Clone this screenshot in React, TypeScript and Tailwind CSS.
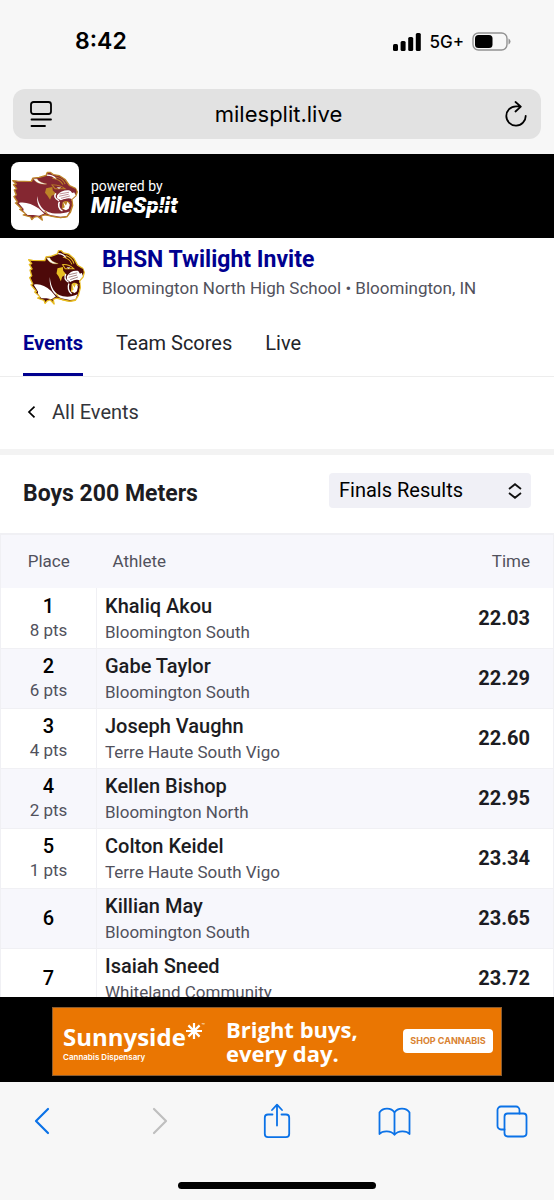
import { useState } from "react";

type Result = {
  place: number;
  points?: string;
  name: string;
  school: string;
  time: string;
};

const results: Result[] = [
  { place: 1, points: "8 pts", name: "Khaliq Akou", school: "Bloomington South", time: "22.03" },
  { place: 2, points: "6 pts", name: "Gabe Taylor", school: "Bloomington South", time: "22.29" },
  { place: 3, points: "4 pts", name: "Joseph Vaughn", school: "Terre Haute South Vigo", time: "22.60" },
  { place: 4, points: "2 pts", name: "Kellen Bishop", school: "Bloomington North", time: "22.95" },
  { place: 5, points: "1 pts", name: "Colton Keidel", school: "Terre Haute South Vigo", time: "23.34" },
  { place: 6, name: "Killian May", school: "Bloomington South", time: "23.65" },
  { place: 7, name: "Isaiah Sneed", school: "Whiteland Community", time: "23.72" }
];

const tabs = ["Events", "Team Scores", "Live"];

type PantherProps = {
  className: string;
  fur: string;
  trim: string;
};

function Panther({ className, fur, trim }: PantherProps) {
  return (
    <svg viewBox="0 0 170 172" preserveAspectRatio="none" className={className} aria-hidden="true">
      <path
        d="M2 33 L14 35 L50 36 L54 24 L70 22 L88 15 L91 5 L99 5 L106 12 L122 16 L137 29 L148 50 L163 59 L168 72 L164 86 L154 98 L156 119 L150 143 L141 158 L125 161 L96 154 L85 151 L75 155 L78 169 L66 156 L57 159 L51 167 L48 158 L29 151 L36 147 L20 132 L25 130 L9 110 L14 107 L5 88 L11 82 L6 65 L12 61 L4 47 L11 45 Z"
        fill={fur}
        stroke={trim}
        strokeWidth="4"
        strokeLinejoin="round"
      />
      <path d="M17 110 C33 105 51 113 69 129 L83 146 L70 154 L55 151 L40 151 L29 137 L30 131 Z" fill="#fff" />
      <path d="M55 27 C62 40 72 48 90 45 C76 41 67 35 65 27 Z" fill="#fff" stroke={trim} strokeWidth="1" />
      <path d="M90 14 C100 14 108 18 113 27" fill="none" stroke="#fff" strokeWidth="4" />
      <path d="M112 20 C125 24 134 33 137 45 M104 25 C119 28 127 36 131 47" fill="none" stroke={trim} strokeWidth="3" />
      <path d="M88 59 L104 55 L105 67 L114 78 L102 85 L98 99 L91 84 L85 75 Z" fill={trim} />
      <path d="M103 48 C116 47 128 52 137 61 L111 61 Z" fill={fur} stroke={trim} strokeWidth="3" />
      <path d="M115 56 L127 57 L121 61 Z" fill="#fff" />
      <path d="M116 84 C124 70 136 65 148 67 L160 72 L164 84 L154 96 C144 91 136 97 126 101 L116 94 Z" fill="#fff" />
      <path d="M122 79 L147 73 M121 87 L146 80 M126 94 L149 86" stroke={fur} strokeWidth="1.5" />
      <path d="M148 64 L164 61 L166 71 L155 76 Z" fill={fur} />
      <path d="M126 104 C136 92 149 96 154 105 L151 130 L140 142 L126 137 Z" fill={fur} />
      <path d="M130 108 C139 99 147 105 151 111 L144 114 L139 134 L128 131 Z" fill={trim} />
      <path d="M132 107 L139 119 L143 106 L149 116 L146 130 L139 135 L130 129 L136 125 Z" fill="#fff" />
      <path d="M65 86 C68 116 78 140 104 145 C119 148 133 146 148 139 L141 155 L125 157 L99 151 C76 142 62 118 65 86 Z" fill="#fff" />
      <path d="M121 102 C112 96 107 87 113 77 M122 106 C118 117 120 131 130 138" fill="none" stroke="#fff" strokeWidth="4" />
      <path d="M92 151 C105 160 128 164 143 155 M84 137 L91 148" fill="none" stroke={trim} strokeWidth="3" />
    </svg>
  );
}

function StatusBar() {
  return (
    <div className="flex h-[89px] items-center justify-between pr-[43px] pb-[6px] pl-[75px] font-['Inter',sans-serif]">
      <span className="text-[23px] font-semibold">8:42</span>
      <div className="flex items-center gap-2">
        <svg width="28" height="18" viewBox="0 0 28 18" aria-hidden="true">
          <rect x="0" y="11" width="5" height="7" rx="1.5" />
          <rect x="7.6" y="8" width="5" height="10" rx="1.5" />
          <rect x="15.2" y="4" width="5" height="14" rx="1.5" />
          <rect x="22.8" y="0" width="5" height="18" rx="1.5" />
        </svg>
        <span className="text-[17px] leading-5 font-medium">5G+</span>
        <svg width="39" height="19" viewBox="0 0 39 19" aria-hidden="true">
          <rect x="1" y="1" width="34" height="17" rx="5.5" fill="none" stroke="#929292" strokeWidth="1.4" />
          <rect x="3" y="3" width="17.5" height="13" rx="3.5" />
          <path d="M36.5 6.5 Q38.5 7.5 38.5 9.5 T36.5 12.5 Z" fill="#929292" />
        </svg>
      </div>
    </div>
  );
}

function AddressBar() {
  return (
    <div className="mx-[13px] mb-[15px] flex h-[50px] shrink-0 items-center rounded-xl bg-[#e2e2e2] pr-[14px] pl-[17px]">
      <button aria-label="Page settings">
        <svg width="22" height="26" viewBox="0 0 22 26" fill="none" stroke="#000" strokeWidth="1.8" strokeLinecap="round" aria-hidden="true">
          <rect x="1" y="1" width="20" height="12" rx="2.5" />
          <path d="M1.5 18.5H21M1.5 25H15" />
        </svg>
      </button>
      <input
        type="text"
        aria-label="Address"
        defaultValue="milesplit.live"
        className="min-w-0 flex-1 text-center font-['Inter',sans-serif] text-[22px] outline-none"
      />
      <button aria-label="Reload">
        <svg width="22" height="26" viewBox="0 0 22 26" fill="none" stroke="#000" strokeWidth="1.8" strokeLinecap="round" strokeLinejoin="round" aria-hidden="true">
          <path d="M20.7 14.8A9.7 9.7 0 1 1 11 5.3H15.5M10.5 1L15.8 5.6L10.5 10.5" />
        </svg>
      </button>
    </div>
  );
}

function BrandBar() {
  return (
    <header className="flex h-[84px] shrink-0 items-center gap-3 bg-black pl-[11px] text-white">
      <div className="flex size-[68px] items-center justify-center rounded-lg bg-white">
        <Panther className="h-[50px] w-[66px]" fur="#842731" trim="#bd8427" />
      </div>
      <div className="flex flex-col pt-1">
        <span className="text-sm leading-4">powered by</span>
        {/* thin black bar runs through the right half of the wordmark */}
        <span className="relative text-[22px] leading-6 font-black italic">
          MileSp!it
          <span className="absolute top-[11px] right-0 h-px w-9 bg-black" />
        </span>
      </div>
    </header>
  );
}

function MeetHeader() {
  const [active, setActive] = useState("Events");

  return (
    <div className="border-b border-[#ededed]">
      <div className="flex items-start gap-[17px] px-7 pt-2">
        <Panther className="mt-[3px] h-[56px] w-[57px] shrink-0" fur="#4d0909" trim="#e8bd22" />
        <div>
          <h1 className="text-[23px] leading-7 font-bold text-[#00008f]">BHSN Twilight Invite</h1>
          <p className="text-[17px] leading-7 text-[#51515c]">Bloomington North High School • Bloomington, IN</p>
        </div>
      </div>
      <nav className="mt-2 flex gap-[33px] px-[23px]">
        {tabs.map((tab) => (
          <button
            key={tab}
            onClick={() => setActive(tab)}
            className={`h-[63px] border-b-[3px] text-xl ${
              tab === active ? "border-[#00008f] font-bold text-[#00008f]" : "border-transparent text-[#222429]"
            }`}
          >
            {tab}
          </button>
        ))}
      </nav>
    </div>
  );
}

function ResultsTable() {
  return (
    <table className="w-full border-collapse border border-t-2 border-[#f0f0f4] text-[#1c1c22]">
      <thead className="bg-[#f7f7fc] text-[17px] text-[#51515c]">
        <tr className="h-[54px]">
          <th className="w-24 font-normal">Place</th>
          <th className="pl-4 text-left font-normal">Athlete</th>
          <th className="pr-[23px] text-right font-normal">Time</th>
        </tr>
      </thead>
      <tbody>
        {results.map((result) => (
          <tr key={result.place} className="h-[60px] border-b border-[#f0f0f4] even:bg-[#f7f7fc]">
            <td className="border-r border-[#f0f0f4] text-center">
              <div className="text-xl leading-6 font-medium text-black">{result.place}</div>
              {result.points && <div className="text-[17px] leading-6 text-[#51515c]">{result.points}</div>}
            </td>
            <td className="pl-2">
              <div className="text-xl leading-7 font-medium">{result.name}</div>
              <div className="text-[17px] leading-6 text-[#51515c]">{result.school}</div>
            </td>
            <td className="pr-[23px] text-right text-xl font-bold">{result.time}</td>
          </tr>
        ))}
      </tbody>
    </table>
  );
}

function AdBanner() {
  return (
    <aside className="flex h-[85px] shrink-0 items-center justify-center bg-black pt-[3px] font-['Open_Sans',sans-serif] text-white">
      <div className="flex h-[69px] w-[450px] items-center border border-[#8a5c30] bg-[#ea7602] pr-2 pl-[10px]">
        <div className="w-[163px] pt-1">
          <div className="flex items-start">
            <span className="text-2xl leading-7 font-bold">Sunnyside</span>
            <svg width="16" height="16" viewBox="0 0 16 16" stroke="#fff" strokeWidth="2.2" className="shrink-0" aria-hidden="true">
              <path d="M8 0V16M0 8H16M2.4 2.4L13.6 13.6M13.6 2.4L2.4 13.6" />
            </svg>
            <span className="text-[4px] leading-none">™</span>
          </div>
          <div className="font-['Inter',sans-serif] text-[8px] leading-3 font-semibold">Cannabis Dispensary</div>
        </div>
        <p className="text-[22px] leading-6 font-bold">
          Bright buys,
          <br />
          every day.
        </p>
        <a href="#shop" className="ml-auto flex h-6 w-[90px] items-center justify-center rounded bg-white font-['Inter',sans-serif] text-[9px] font-bold whitespace-nowrap text-[#d98231]">
          SHOP CANNABIS
        </a>
      </div>
    </aside>
  );
}

function BrowserToolbar() {
  return (
    <footer className="shrink-0 bg-[#f7f7f7]">
      <div className="flex h-[78px] items-center justify-between px-[26px] text-[#0b72e7]">
        <button aria-label="Back" className="flex w-8 justify-center">
          <svg width="16" height="28" viewBox="0 0 16 28" fill="none" stroke="currentColor" strokeWidth="2.2" strokeLinecap="round" strokeLinejoin="round" aria-hidden="true">
            <path d="M14 2L2 14L14 26" />
          </svg>
        </button>
        <button aria-label="Forward" className="flex w-8 justify-center text-[#bfbfbf]">
          <svg width="16" height="28" viewBox="0 0 16 28" fill="none" stroke="currentColor" strokeWidth="2.2" strokeLinecap="round" strokeLinejoin="round" aria-hidden="true">
            <path d="M2 2L14 14L2 26" />
          </svg>
        </button>
        <button aria-label="Share" className="flex w-8 justify-center">
          <svg width="28" height="36" viewBox="0 0 28 36" fill="none" stroke="currentColor" strokeWidth="1.8" strokeLinecap="round" strokeLinejoin="round" aria-hidden="true">
            <path d="M9.5 11.5H5A3.2 3.2 0 0 0 1.8 14.7V31A3.2 3.2 0 0 0 5 34.2H23A3.2 3.2 0 0 0 26.2 31V14.7A3.2 3.2 0 0 0 23 11.5H18.5M14 22.5V2M9 7L14 1.7L19 7" />
          </svg>
        </button>
        <button aria-label="Bookmarks" className="flex w-8 justify-center">
          <svg width="33" height="29" viewBox="0 0 33 29" fill="none" stroke="currentColor" strokeWidth="1.8" strokeLinejoin="round" className="shrink-0" aria-hidden="true">
            <path d="M16.5 5.5C13.5 .2 4.5 .2 1.5 5.5V27C4.5 23.3 13 23.3 16.5 27.7C20 23.3 28.5 23.3 31.5 27V5.5C28.5 .2 19.5 .2 16.5 5.5ZM16.5 5.5V27.5" />
          </svg>
        </button>
        <button aria-label="Tabs" className="flex w-8 justify-center">
          <svg width="32" height="33" viewBox="0 0 32 33" fill="none" stroke="currentColor" strokeWidth="1.8" strokeLinecap="round" aria-hidden="true">
            <rect x="8.5" y="8.5" width="22" height="23" rx="3.2" />
            <path d="M8.5 24.5H5A3.5 3.5 0 0 1 1.5 21V5A3.5 3.5 0 0 1 5 1.5H20A3.5 3.5 0 0 1 23.5 5V8.5" />
          </svg>
        </button>
      </div>
      <div className="flex justify-center pt-[22px] pb-[11px]">
        <div className="h-[7px] w-[198px] rounded-full bg-black" />
      </div>
    </footer>
  );
}

export default function App() {
  return (
    <div className="flex h-screen flex-col bg-[#f7f7f7] font-['Roboto',sans-serif] text-black">
      <StatusBar />
      <AddressBar />
      <BrandBar />
      <main className="min-h-0 flex-1 overflow-y-auto bg-white [scrollbar-width:none]">
        <MeetHeader />
        <a href="#events" className="flex h-[78px] items-center gap-4 border-b-[6px] border-[#f3f3f3] px-[27px] pb-[2px] text-xl text-[#33343a]">
          <svg width="9" height="12" viewBox="0 0 9 12" fill="none" stroke="#000" strokeWidth="1.7" className="shrink-0" aria-hidden="true">
            <path d="M7.5 .7L2 6L7.5 11.3" />
          </svg>
          All Events
        </a>
        <div className="flex h-[78px] items-center justify-between px-[23px]">
          <h2 className="text-[23px] font-bold text-[#1c1c22]">Boys 200 Meters</h2>
          <div className="relative mb-2 w-[202px]">
            <select aria-label="Round" className="h-[35px] w-full appearance-none rounded bg-[#f0f0f6] px-[10px] text-xl">
              <option>Finals Results</option>
            </select>
            <svg width="14" height="16" viewBox="0 0 14 16" fill="none" stroke="#111" strokeWidth="1.8" className="pointer-events-none absolute top-[10px] right-[9px]" aria-hidden="true">
              <path d="M1 6L7 1.2L13 6M1 10L7 14.8L13 10" />
            </svg>
          </div>
        </div>
        <ResultsTable />
      </main>
      <AdBanner />
      <BrowserToolbar />
    </div>
  );
}
